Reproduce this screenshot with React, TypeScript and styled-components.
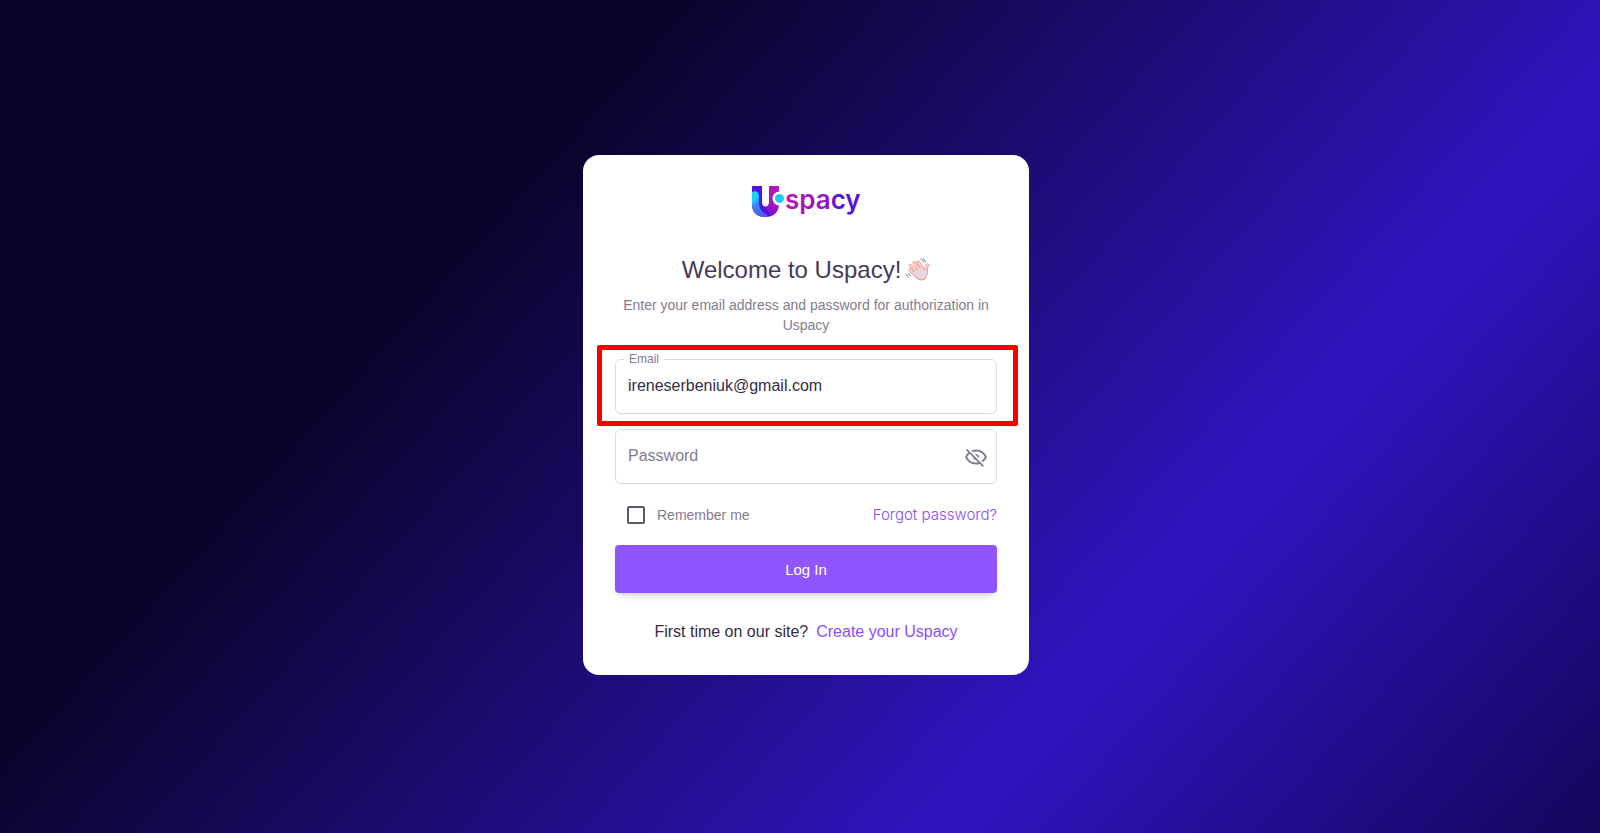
import React from "react";
import styled, { createGlobalStyle } from "styled-components";

const GlobalStyle = createGlobalStyle`
  *, *::before, *::after { box-sizing: border-box; }
  body {
    margin: 0;
    font-family: "Liberation Sans", Helvetica, Arial, sans-serif;
    color: #362b48;
  }
`;

const Page = styled.main`
  min-height: 100vh;
  display: flex;
  align-items: center;
  justify-content: center;
  padding: 16px 0 19px 12px;
  background: linear-gradient(132deg, #090427 28%, #2f14c0 72%, #14065a 100%);
`;

const Card = styled.section`
  width: 100%;
  max-width: 446px;
  padding: 29px 32px 32px;
  border-radius: 16px;
  background: #fff;
  display: flex;
  flex-direction: column;
`;

const Logo = styled.svg`
  display: block;
  align-self: center;
  width: 110px;
  height: 40px;
  overflow: visible;
`;

const Title = styled.h1`
  margin: 30px 0 0;
  display: flex;
  align-items: center;
  justify-content: center;
  gap: 5px;
  font-size: 24px;
  line-height: 32px;
  font-weight: 400;
  color: #453a55;
`;

const Wave = styled.svg`
  width: 24px;
  height: 24px;
`;

const Subtitle = styled.p`
  margin: 9px 0 0;
  font-size: 14px;
  line-height: 20px;
  text-align: center;
  color: #857b8e;
`;

const Form = styled.form`
  margin-top: 24px;
  display: flex;
  flex-direction: column;
`;

const Field = styled.div`
  position: relative;
  display: flex;
  align-items: center;
  height: 55px;
  border: 1px solid #ddd8e2;
  border-radius: 6px;
  & + & { margin-top: 15px; }
`;

const FloatingLabel = styled.label`
  position: absolute;
  top: -8px;
  left: 8px;
  padding: 0 5px;
  background: #fff;
  font-size: 12px;
  line-height: 14px;
  color: #857b8e;
`;

const Highlight = styled.span`
  position: absolute;
  inset: -15px -22px -13px -19px;
  border: 5px solid #f80000;
  border-radius: 2px;
  pointer-events: none;
`;

const Input = styled.input`
  flex: 1;
  min-width: 0;
  height: 100%;
  padding: 0 12px 2px;
  border: 0;
  outline: 0;
  background: transparent;
  font: inherit;
  font-size: 16px;
  color: #362b48;
  &::placeholder { color: #857b8e; opacity: 1; }
`;

const IconButton = styled.button`
  display: flex;
  margin-right: 8px;
  padding: 0;
  border: 0;
  background: none;
  color: #857b8e;
`;

const Options = styled.div`
  margin-top: 21px;
  padding-left: 12px;
  display: flex;
  align-items: center;
  justify-content: space-between;
  line-height: 20px;
`;

const Remember = styled.label`
  display: flex;
  align-items: center;
  gap: 12px;
  font-size: 14px;
  color: #857b8e;
`;

const Checkbox = styled.input`
  appearance: none;
  width: 18px;
  height: 18px;
  margin: 0;
  border: 2px solid #62586e;
  border-radius: 2px;
`;

const Link = styled.a`
  color: #8a4dfa;
  text-decoration: none;
`;

const ForgotLink = styled(Link)`
  font-family: Inter, sans-serif;
  font-size: 15px;
  font-weight: 300;
`;

const Submit = styled.button`
  margin-top: 20px;
  height: 48px;
  border: 0;
  border-radius: 4px;
  background: #9155fd;
  box-shadow: 0 4px 8px -4px rgba(58, 53, 65, 0.42);
  color: #fff;
  font: inherit;
  font-size: 15px;
`;

const Footer = styled.p`
  margin: 28px 0 0;
  display: flex;
  justify-content: center;
  gap: 8px;
  font-size: 16px;
  line-height: 22px;
`;

function UspacyLogo() {
  return (
    <Logo viewBox="0 0 110 40" role="img" aria-label="Uspacy">
      <defs>
        <linearGradient id="word" x1="0" x2="1" y1="0" y2="0">
          <stop offset="0.1" stopColor="#b514b8" />
          <stop offset="0.5" stopColor="#9a16c4" />
          <stop offset="0.72" stopColor="#5712de" />
        </linearGradient>
        <linearGradient id="right" x1="1" x2="0.2" y1="0" y2="1">
          <stop offset="0.35" stopColor="#b016bc" />
          <stop offset="1" stopColor="#5a12dc" />
        </linearGradient>
        <linearGradient id="left" x1="0" x2="0.6" y1="0" y2="1">
          <stop offset="0.3" stopColor="#1fd0fb" />
          <stop offset="0.5" stopColor="#3a82f8" />
          <stop offset="1" stopColor="#4a5cf0" />
        </linearGradient>
      </defs>
      <path d="M1 2H11V18C11 24 18 24 18 18V2H28V20C28 29 22 33 14.500 33S1 29 1 20Z" fill="url(#right)" />
      <path d="M1 2H11V19C11 22 12 23 14 23L20 31Q17 33 14 33C6 33 1 28 1 20Z" fill="#5312df" />
      <path d="M1 8C5 6 8 8 8 12V18C8 25 11 28 18 32.500C6 35 1 27 1 19Z" fill="url(#left)" />
      <circle cx="28.500" cy="14.500" r="7" fill="#fff" />
      <circle cx="28.500" cy="14.500" r="4.500" fill="#1fcafa" />
      <text x="34" y="25" fontFamily="Inter, sans-serif" fontSize="26" fontWeight="600" fill="url(#word)">spacy</text>
    </Logo>
  );
}

function WavingHand() {
  return (
    <Wave viewBox="0 0 24 24" aria-hidden="true">
      <g fill="none" stroke="#f2a09c" strokeLinecap="round" strokeWidth="3.400">
        <path d="M4 12 11 18M4.500 7.500l7.500 7.500M8 4.500 15 13M12 4 17 12M21.500 7C20 9 20 12 20.500 15" />
      </g>
      <path d="M7 13 17 8Q19 12 21.500 10Q23 17 19.500 21C15 24.500 11 22 6 16Z" fill="#f2a09c" />
      <g fill="none" stroke="#f8cfce" strokeLinecap="round" strokeWidth="1.800">
        <path d="M4 12 11 18M4.500 7.500l7.500 7.500M8 4.500 15 13M12 4 17 12M21.500 7C19.500 9 19.500 12 20 15" />
      </g>
      <path d="M9 13 16 10Q18 13 20.500 12Q22 17 18.500 20C15 22.500 11 20 8 16Z" fill="#e6d8e1" />
      <path d="M14.500 1Q17 1.500 17.500 4M17 .5Q19.500 2 19.500 4.500M.5 16Q1 18.500 3 19.500M2.500 15Q3 17 5 18" fill="none" stroke="#8d8792" />
    </Wave>
  );
}

function EyeOff() {
  return (
    <svg width="24" height="24" viewBox="0 0 24 24" fill="currentColor" aria-hidden="true">
      <path d="M2 5.270 3.280 4 20 20.720 18.730 22l-3.080-3.080c-1.150.38-2.370.58-3.650.58-5 0-9.270-3.110-11-7.500.69-1.760 1.790-3.310 3.190-4.540L2 5.270M12 9a3 3 0 0 1 3 3 3 3 0 0 1-.17 1L11 9.170A3 3 0 0 1 12 9m0-4.500c5 0 9.270 3.110 11 7.500a11.790 11.790 0 0 1-4 5.190l-1.420-1.430A9.860 9.860 0 0 0 20.820 12 9.820 9.820 0 0 0 12 6.500c-1.090 0-2.160.18-3.160.5L7.300 5.470c1.440-.62 3.030-.97 4.700-.97M3.180 12A9.820 9.820 0 0 0 12 17.500c.69 0 1.370-.07 2-.21L11.720 15A3.064 3.064 0 0 1 9 12.280L5.600 8.870c-.99.85-1.820 1.910-2.420 3.130Z" />
    </svg>
  );
}

export default function App() {
  return (
    <>
      <GlobalStyle />
      <Page>
        <Card>
          <UspacyLogo />
          <Title>
            Welcome to Uspacy! <WavingHand />
          </Title>
          <Subtitle>Enter your email address and password for authorization in Uspacy</Subtitle>
          <Form onSubmit={(event) => event.preventDefault()}>
            <Field>
              <FloatingLabel htmlFor="email">Email</FloatingLabel>
              <Input id="email" type="email" defaultValue="ireneserbeniuk@gmail.com" />
              <Highlight />
            </Field>
            <Field>
              <Input type="password" placeholder="Password" aria-label="Password" />
              <IconButton type="button" aria-label="Show password">
                <EyeOff />
              </IconButton>
            </Field>
            <Options>
              <Remember>
                <Checkbox type="checkbox" />
                Remember me
              </Remember>
              <ForgotLink href="#forgot">Forgot password?</ForgotLink>
            </Options>
            <Submit type="submit">Log In</Submit>
          </Form>
          <Footer>
            First time on our site? <Link href="#create">Create your Uspacy</Link>
          </Footer>
        </Card>
      </Page>
    </>
  );
}
